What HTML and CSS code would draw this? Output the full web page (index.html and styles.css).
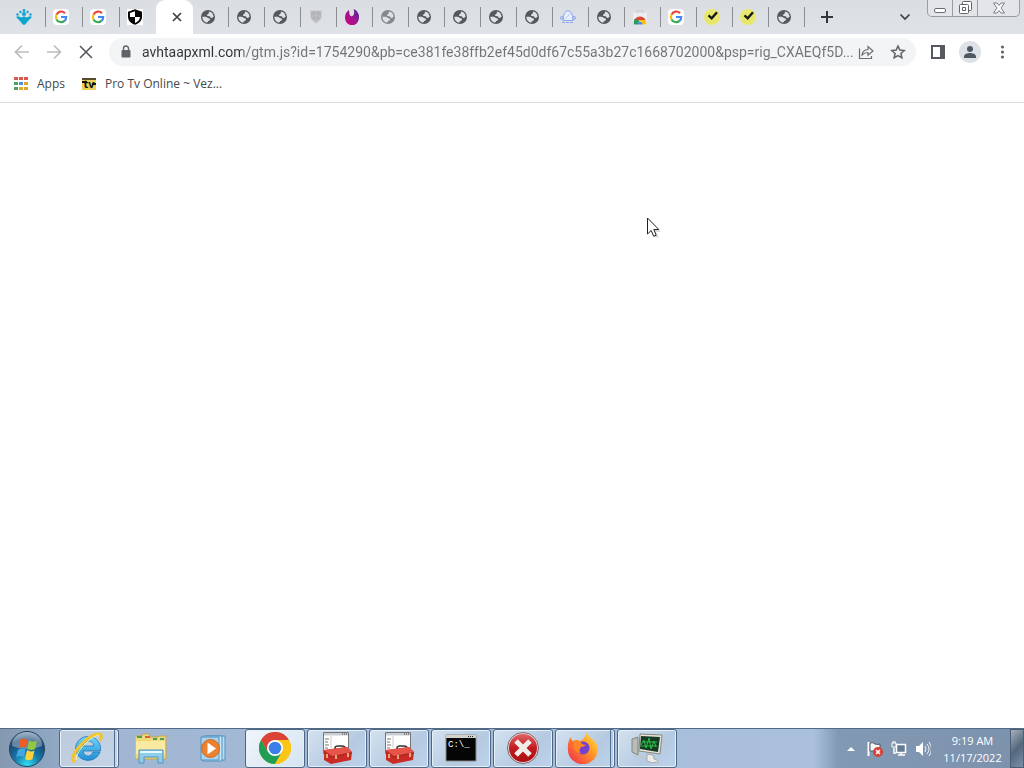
FILE: index.html
```html
<!DOCTYPE html>
<html lang="en">
<head>
<meta charset="utf-8">
<title>avhtaapxml.com</title>
<link rel="stylesheet" href="styles.css">
</head>
<body>
<svg class="sprite" aria-hidden="true">
  <defs>
    <linearGradient id="gPurple" x1="1" y1="0" x2="0" y2="1"><stop offset="0" stop-color="#3a2c9c"/><stop offset=".5" stop-color="#a3148f"/><stop offset="1" stop-color="#d3007c"/></linearGradient>
    <radialGradient id="gOrb" cx=".5" cy=".95" r=".95"><stop offset="0" stop-color="#2fe0f5"/><stop offset=".4" stop-color="#1577a8"/><stop offset=".75" stop-color="#1d4973"/><stop offset="1" stop-color="#7e9cb8"/></radialGradient>
    <linearGradient id="gIe" x1="0" y1="0" x2="0" y2="1"><stop offset="0" stop-color="#73d5f7"/><stop offset="1" stop-color="#1f8fd6"/></linearGradient>
    <linearGradient id="gFox" x1="1" y1="0" x2="0" y2="1"><stop offset="0" stop-color="#fff04a"/><stop offset=".4" stop-color="#ff9a26"/><stop offset="1" stop-color="#f0244e"/></linearGradient>
    <linearGradient id="gRed" x1="0" y1="0" x2="0" y2="1"><stop offset="0" stop-color="#e2696b"/><stop offset=".5" stop-color="#c21a20"/><stop offset="1" stop-color="#a80f14"/></linearGradient>
  </defs>
  <symbol id="globe" viewBox="0 0 16 16">
    <circle cx="8" cy="8" r="7" fill="currentColor"/>
    <path d="M9.500 2.400c2.400.6 4 2.600 4.100 5.200-.6.900-1.500 1.500-2.500 1.300-.9-.2-.7-1.400-1.500-1.600-1-.2-2.600.1-2.700-1 0-1 1.500-.9 1.700-1.800.2-.7.200-1.500.9-2.100zM2.400 7.700h3.200c1.500 0 1.800 1.400 3 1.500 1.100.1 1.700.9 1.300 1.800-.4.800-1.500.6-1.900 1.300-.3.500-.3.900-.8 1.300-2.700-.3-4.800-2.700-4.800-5.900z" fill="#dee1e6"/>
  </symbol>
  <symbol id="google" viewBox="0 0 16 16">
    <rect width="16" height="16" rx="4" fill="#fff"/>
    <g fill="none" stroke-width="2.100"><path d="M12 4.200A5.200 5.200 0 0 0 3.500 5.600" stroke="#ea4335"/><path d="M3.500 5.600a5.200 5.200 0 0 0 0 4.800" stroke="#fbbc05"/><path d="M3.500 10.400a5.200 5.200 0 0 0 8 1.500" stroke="#34a853"/><path d="M8 8h5.200a5 5 0 0 1-1.700 3.900" stroke="#4285f4"/></g>
  </symbol>
  <symbol id="check" viewBox="0 0 16 16"><circle cx="8" cy="8" r="8" fill="#e7e86b"/><path d="M4.500 6.300l3.200 3 5.300-6" fill="none" stroke="#17181c" stroke-width="2.400"/></symbol>
  <symbol id="toolbox" viewBox="0 0 32 32">
    <path d="M2.500 .5h25v21h-25z" fill="#fff" stroke="#777"/><path d="M3 1h24v2.500H3z" fill="#c9cdd2"/><path d="M21 2h1m1 0h1m1 0h1" stroke="#333"/><path d="M4 7h4M4 10h3M4 13h4M4 16h3" stroke="#777"/><path d="M10 4v12" stroke="#ccc"/>
    <path d="M14 18v-2q0-2 3-2h4q3 0 3 2v2" fill="none" stroke="#333" stroke-width="1.500"/><path d="M3 18l23-3 5 5-1 8-20 4-7-4z" fill="#c92b25"/><path d="M3 18l23-3 5 5-20 4z" fill="#e7544a"/><path d="M3 21l8 4 20-4" fill="none" stroke="#a82420"/><path d="M6 22v4M15 23v4M27 21v4" stroke="#ead58c" stroke-width="1.500"/>
  </symbol>
</svg>

<header class="browser">
  <div class="tabstrip">
    <nav class="tabs" aria-label="Tabs">
      <button class="tab wide" aria-label="Tab 1"><svg viewBox="0 0 16 16"><g fill="#0fa5cf"><circle cx="8" cy="1.500" r="1.400"/><circle cx="4.500" cy="3" r="1.200"/><circle cx="11.500" cy="3" r="1.200"/><circle cx="1.500" cy="5.500" r="1.200"/><circle cx="14.500" cy="5.500" r="1.200"/><circle cx="8" cy="5" r="2"/><path d="M0 8q2-1.500 4 0 2.500 1 4-1 1.500 2 4 1 2-1.500 4 0l-4.500 4.500Q10 15.500 8 16q-2-.5-3.500-3.500z"/></g></svg></button>
      <button class="tab wide" aria-label="Google"><svg><use href="#google"/></svg></button>
      <button class="tab wide" aria-label="Google"><svg><use href="#google"/></svg></button>
      <button class="tab wide last" aria-label="Security"><svg viewBox="0 0 16 16"><path fill="#fff" d="M0 0h16v16H0z"/><path d="M8 .3l7 2.500v5c0 4-3 6.700-7 8-4-1.300-7-4-7-8v-5z" fill="#050505"/><path d="M8 2.300v5.700H3V4.100zM8 8h5c-.2 3-2.200 4.900-5 5.900z" fill="#fff"/></svg></button>
      <button class="tab active" aria-label="Close tab"><svg viewBox="0 0 16 16"><path d="M4 4l8 8M12 4l-8 8" stroke="#3c4043" stroke-width="1.700"/></svg></button>
      <button class="tab" aria-label="Tab 6"><svg><use href="#globe"/></svg></button>
      <button class="tab" aria-label="Tab 7"><svg><use href="#globe"/></svg></button>
      <button class="tab" aria-label="Tab 8"><svg><use href="#globe"/></svg></button>
      <button class="tab" aria-label="Tab 9"><svg viewBox="0 0 16 16"><path d="M2 1h12v9l-6 5-6-5z" fill="#cfd1d4"/><path d="M7 2v11M9 2v11M3 3h3v2H3m0 3h3v2H4M13 3h-3v2h3m0 3h-3v2h2M6 6H3m7 0h3" fill="none" stroke="#a2a5a9"/></svg></button>
      <button class="tab" aria-label="Tab 10"><svg viewBox="0 0 16 16"><path d="M5 1q0 4 1.500 6Q9 8 10 5q.5-3-.5-5Q15 2 15 8.500A7 7.500 0 0 1 1 9Q.8 4 5 1z" fill="url(#gPurple)"/></svg></button>
      <button class="tab pale" aria-label="Tab 11"><svg><use href="#globe"/></svg></button>
      <button class="tab" aria-label="Tab 12"><svg><use href="#globe"/></svg></button>
      <button class="tab" aria-label="Tab 13"><svg><use href="#globe"/></svg></button>
      <button class="tab" aria-label="Tab 14"><svg><use href="#globe"/></svg></button>
      <button class="tab" aria-label="Tab 15"><svg><use href="#globe"/></svg></button>
      <button class="tab" aria-label="Tab 16"><svg viewBox="0 0 16 16"><g fill="none" stroke="#8aa6ee"><path d="M8 1.500q5 1 5 10H3q0-9 5-10z" fill="#e5edff"/><path d="M5 10l6-6" stroke="#b9caf6"/><circle cx="2" cy="9" r="1.500"/><circle cx="14" cy="9" r="1.500"/><path d="M2 13.500h12" stroke-dasharray="3 1"/></g></svg></button>
      <button class="tab" aria-label="Tab 17"><svg><use href="#globe"/></svg></button>
      <button class="tab" aria-label="Web Store"><svg viewBox="0 0 16 16"><path d="M1 4h14v12H1z" fill="#eceeef"/><path d="M5.500 4V1.500h5V4" fill="none" stroke="#c8cbd0"/><path d="M2.500 11A6 6 0 0 1 13.500 11l-5.500.5z" fill="#dd4537"/><path d="M2.500 10q-1 2-.8 5.500H6q0-3 2-3.500z" fill="#2a9b56"/><path d="M8 11h5.500q1 2 .8 4.500H9z" fill="#fbc116"/><path d="M5.500 15.500a2.500 2.500 0 0 1 5 0z" fill="#4285f4"/></svg></button>
      <button class="tab" aria-label="Google"><svg><use href="#google"/></svg></button>
      <button class="tab" aria-label="Tab 20"><svg><use href="#check"/></svg></button>
      <button class="tab" aria-label="Tab 21"><svg><use href="#check"/></svg></button>
      <button class="tab" aria-label="Tab 22"><svg><use href="#globe"/></svg></button>
    </nav>
    <button class="icon newtab" aria-label="New tab"><svg viewBox="0 0 16 16"><path d="M8 2v12M2 8h12" stroke="#33373b" stroke-width="2"/></svg></button>
    <button class="icon search" aria-label="Search tabs"><svg viewBox="0 0 16 16"><path d="M3.500 5.500L8 10l4.500-4.500" fill="none" stroke="#3c4043" stroke-width="1.700"/></svg></button>
    <div class="window-controls">
      <button aria-label="Minimize"><svg viewBox="0 0 16 16"><rect x="2.500" y="8.500" width="11" height="4" rx="1.500" fill="#fff" stroke="#686d73"/></svg></button>
      <button aria-label="Restore"><svg viewBox="0 0 16 16"><g fill="#fff" stroke="#60656b"><rect x="5.500" y="1.500" width="9" height="9" rx="1"/><rect x="2.500" y="4.500" width="9" height="9" rx="1"/><path d="M5.500 7.500h3v3h-3z"/></g></svg></button>
      <button class="close" aria-label="Close"><svg viewBox="0 0 16 16"><path d="M2.500 3h3.500l2 2.500L10 3h3.500L10 8l3.500 5H10L8 10.500 6 13H2.500L6 8z" fill="#fff" stroke="#777b80"/></svg></button>
    </div>
  </div>

  <div class="toolbar">
    <div class="history">
      <button class="icon" aria-label="Back"><svg viewBox="0 0 16 16"><path d="M15 8H2M8 1.500L1.500 8 8 14.500" fill="none" stroke="#babcbe" stroke-width="1.700"/></svg></button>
      <button class="icon" aria-label="Forward"><svg viewBox="0 0 16 16"><path d="M1 8h13M8 1.500L14.500 8 8 14.500" fill="none" stroke="#babcbe" stroke-width="1.700"/></svg></button>
      <button class="icon" aria-label="Stop"><svg viewBox="0 0 16 16"><path d="M2 2l12 12M14 2L2 14" stroke="#55595d" stroke-width="1.600"/></svg></button>
    </div>
    <div class="omnibox">
      <svg class="lock" viewBox="0 0 16 16"><path d="M4.500 6h7q1 0 1 1v5.500q0 1-1 1h-7q-1 0-1-1V7q0-1 1-1z" fill="#5f6368"/><path d="M5.500 7V4.500a2.500 2.500 0 0 1 5 0V7" fill="none" stroke="#5f6368" stroke-width="1.400"/></svg>
      <input class="url" type="text" aria-label="Address" value="avhtaapxml.com/gtm.js?id=1754290&amp;pb=ce381fe38ffb2ef45d0df67c55a3b27c1668702000&amp;psp=rig_CXAEQf5D...">
      <div class="page-actions">
        <button class="icon" aria-label="Share"><svg viewBox="0 0 16 16"><path d="M1.500 4.500v10h12V12M4 11q.5-5 6-5.500V2.500L15 7l-5 4.300V8.500Q6.500 8.500 4 11z" fill="none" stroke="#6a6e72" stroke-width="1.200"/></svg></button>
        <button class="icon" aria-label="Bookmark"><svg viewBox="0 0 16 16"><path d="M8 2l1.800 4.100 4.400.4-3.300 2.900 1 4.400L8 11.500l-3.900 2.300 1-4.400-3.300-2.900 4.400-.4z" fill="none" stroke="#5f6368" stroke-width="1.500"/></svg></button>
      </div>
    </div>
    <div class="actions">
      <button class="icon" aria-label="Side panel"><svg viewBox="0 0 16 16"><path d="M2 2h12v12H2z" fill="#fff" stroke="#56595e" stroke-width="2"/><path d="M10 2h4v12h-4z" fill="#56595e"/></svg></button>
      <button class="icon avatar" aria-label="Profile"><svg viewBox="0 0 16 16"><circle cx="8" cy="5" r="3" fill="#4e5862"/><path d="M2 14v-1.500C2 10 5.500 9 8 9s6 1 6 3.500V14z" fill="#4e5862"/></svg></button>
      <button class="icon" aria-label="Menu"><svg viewBox="0 0 16 16"><g fill="#5f6368"><circle cx="8.500" cy="3" r="1.600"/><circle cx="8.500" cy="8" r="1.600"/><circle cx="8.500" cy="13" r="1.600"/></g></svg></button>
    </div>
  </div>

  <nav class="bookmarks" aria-label="Bookmarks">
    <a href="#"><svg viewBox="0 0 16 16"><path d="M1 1h4v3H1zM6 1h4v3H6zM11 1h4v3h-4z" fill="#dc584b"/><path d="M1 6h4v3H1zM1 11h4v3H1z" fill="#48a35e"/><path d="M6 6h4v3H6z" fill="#4b8fe8"/><path d="M11 6h4v3h-4zM6 11h4v3H6zM11 11h4v3h-4z" fill="#e0a72e"/></svg>Apps</a>
    <a href="#"><svg viewBox="0 0 16 16"><path d="M1 2h14v12H1z" fill="#e7d157"/><path d="M1 2h14v2H1z" fill="#5b4b2a"/><path d="M1 6h5m9 2h-4" stroke="#111" stroke-width="2"/><text x="8" y="12" text-anchor="middle" class="tv">tv</text></svg>Pro Tv Online ~ Vez...</a>
  </nav>
</header>

<main class="page">
  <svg class="cursor" viewBox="0 0 16 24" aria-hidden="true"><path d="M3 4l11 11H9l3 5-3 1-3-5z" fill="#bbb" opacity=".5"/><path d="M.5 1v16l3.700-3.500 2.500 5.800 2.500-1.100L6.800 12.500h5z" fill="#fff" stroke="#222"/></svg>
</main>

<footer class="taskbar">
  <button class="start" aria-label="Start"><svg viewBox="0 0 36 36"><circle cx="18" cy="18" r="17.500" fill="url(#gOrb)" stroke="#25435f"/><path d="M3 15a15 14 0 0 1 30 0q-15 6-30 0z" fill="#fff" opacity=".32"/><path d="M11 9q4-3 7.500 0l-1.500 8q-4-2-7.500.5z" fill="#ee5b25"/><path d="M20 9.500q4 2.500 8 0l-2 8.500q-4 2-7.500 0z" fill="#92c83e"/><path d="M9 19q4-2.500 7.500-.5L15 26q-4-2-8 .5z" fill="#43a7e2"/><path d="M18 19q4 2.500 7.500.5L23.500 28q-3.500 2.500-7.500 0z" fill="#fcd13a"/></svg></button>
  <div class="tasks">
    <button class="task stacked ie" aria-label="Internet Explorer"><svg viewBox="0 0 32 32"><path d="M29 20a12.500 12 0 1 1 .5-5v4H12q1 5 5.500 5 3 0 4.500-4zM12 14h11q-1-5-5.500-5T12 14z" fill="url(#gIe)" stroke="#2479b8" stroke-width=".8"/><path d="M4 30Q-2 27 8 15 19 2 28 2q4 0 1 7" fill="none" stroke="#f2c52c" stroke-width="3"/><path d="M5 28Q5 20 16 10 24 3 28 3" fill="none" stroke="#fff0a0"/></svg></button>
    <button class="task flat" aria-label="Explorer"><svg viewBox="0 0 32 32"><path d="M0 4h7l1-2h6l1 3h8l1-1h7v23H0z" fill="#f0d979" stroke="#c5a84e"/><path d="M2 5h5M18 7h4M25 7h4" stroke="#4c9c61" stroke-width="2"/><path d="M10 5h5" stroke="#d8643a" stroke-width="2"/><path d="M1 9h29v13H1z" fill="#fae9a0"/><path d="M4 31V18h24v13h-5v-6H9v6z" fill="#8fcdec" stroke="#5194be"/><path d="M5 20h22" stroke="#e5faff" stroke-width="2"/></svg></button>
    <button class="task flat" aria-label="Media Player"><svg viewBox="0 0 32 32"><path d="M9 4h19v24H9z" fill="#b9def2" stroke="#5290bf"/><path d="M6 4h19v25H6z" fill="#c8e8f5" stroke="#5290bf"/><path d="M4 5h18v23H4z" fill="#a9d4ef" stroke="#5290bf"/><circle cx="13.500" cy="16.500" r="9" fill="#ed8130" stroke="#cf6920"/><path d="M10.500 10.500l8.500 6-8.500 6z" fill="#fff"/></svg></button>
    <button class="task bright" aria-label="Chrome"><svg viewBox="0 0 32 32"><circle cx="16" cy="16" r="16" fill="#fbc616"/><path d="M2.100 8A16 16 0 0 1 29.900 8H16l-7 12z" fill="#db4337"/><path d="M2.100 8A16 16 0 0 0 16 32l7-12-14 0z" fill="#209e55"/><path d="M29.900 8A16 16 0 0 1 16 32l7-12-1-12z" fill="#fbc616"/><circle cx="16" cy="16" r="8" fill="#fff"/><circle cx="16" cy="16" r="6.300" fill="#3d7fe8"/></svg></button>
    <button class="task" aria-label="Tools"><svg><use href="#toolbox"/></svg></button>
    <button class="task" aria-label="Tools"><svg><use href="#toolbox"/></svg></button>
    <button class="task" aria-label="Command Prompt"><svg viewBox="0 0 32 32"><path d="M1 3h30v26H1z" fill="#050505" stroke="#888"/><path d="M1 3h30v3H1z" fill="#d4d2ca"/><path d="M23 4.500h1m1 0h1m1 0h1" stroke="#222"/><text x="3" y="15" class="prompt">C:\_</text></svg></button>
    <button class="task" aria-label="Stop"><svg viewBox="0 0 32 32"><circle cx="16" cy="16" r="15" fill="url(#gRed)" stroke="#e7d8d8" stroke-width="2"/><circle cx="16" cy="16" r="15.500" fill="none" stroke="#7b6670"/><path d="M9 9l14 14M23 9L9 23" stroke="#f0ece8" stroke-width="5"/></svg></button>
    <button class="task stacked" aria-label="Firefox"><svg viewBox="0 0 32 32"><path d="M20 0q1 4 5 7 6 4 5.500 11A14.500 14 0 0 1 1 18Q0 10 4 5q0 3 2 4 4-2 7 0 5-2 7-9z" fill="url(#gFox)"/><circle cx="16" cy="16" r="6.500" fill="#7542cf"/><path d="M7 9q6-1 8 3l4 1q-2 2-5 2-3 4 0 6-6 0-7-5z" fill="#ff8427"/></svg></button>
    <button class="task" aria-label="Monitor"><svg viewBox="0 0 32 32"><path d="M1 7l6-2v18l-6-3z" fill="#b9bbb4" stroke="#858780"/><path d="M9 2l22 1-2 19-21-3z" fill="#e7e5dc" stroke="#85877f"/><path d="M10 4l19 1-2 15-18-3z" fill="#153b22"/><path d="M10 13l3-5 2 8 3-10 2 11 3-8 2 6M11 10h15M10 14h16" fill="none" stroke="#28bd46"/><path d="M16 22l6 1 1 4q5 1 4 3-6 2-11-1z" fill="#ececea" stroke="#aaa"/><path d="M2 22l14 4-3 1-11-4z" fill="#c3c6c3"/></svg></button>
  </div>
  <div class="tray">
    <button class="icon" aria-label="Show hidden icons"><svg viewBox="0 0 16 16"><path d="M4 10l4-4 4 4z" fill="#fff"/></svg></button>
    <button class="icon" aria-label="Action Center"><svg viewBox="0 0 16 16"><path d="M1.500 1v14" stroke="#fff" stroke-width="2"/><path d="M3 2q3-1 5 1 3 1 5 0v7H3z" fill="#f4f6f8" stroke="#555d69"/><circle cx="11" cy="11" r="5" fill="#d84034"/><path d="M9 9l4 4M13 9l-4 4" stroke="#fff" stroke-width="1.500"/></svg></button>
    <button class="icon" aria-label="Network"><svg viewBox="0 0 16 16"><path d="M5.500 3.500h9v8h-9zM7 14h7M10 12v2M3 7v5h2" fill="#657b94" stroke="#fff" stroke-width="1.500"/><path d="M1 2h4v4H1zM2 0v2M4 0v2" fill="#8293a7" stroke="#fff"/></svg></button>
    <button class="icon" aria-label="Volume"><svg viewBox="0 0 16 16"><path d="M1 5h3l4-4v14l-4-4H1z" fill="#fff"/><path d="M10 5q2 3 0 6M12 3q4 5 0 10M14 1q5 7 0 14" fill="none" stroke="#eef3fa"/></svg></button>
    <button class="clock"><span>9:19 AM</span><span>11/17/2022</span></button>
    <button class="desktop" aria-label="Show desktop"></button>
  </div>
</footer>
</body>
</html>
```
FILE: styles.css
```css
* { box-sizing: border-box; }
body { margin: 0; min-height: 100vh; display: flex; flex-direction: column; background: #fff; font-family: "Open Sans", "Noto Sans", sans-serif; font-size: 12px; color: #3c4043; }
button { border: 0; padding: 0; background: none; font: inherit; color: inherit; }
svg { display: block; width: 16px; height: 16px; flex: none; }
.sprite { position: absolute; width: 0; height: 0; }
.tabstrip { display: flex; height: 34px; background: linear-gradient(#dadde1, #dfe2e7); align-items: center; padding-left: 9px; }
.tabs { display: flex; height: 100%; align-items: center; }
.tab { display: flex; align-items: center; width: 36px; height: 20px; padding-left: 7px; border-right: 1px solid #8b8e93; color: #55595e; }
.wide { width: 37px; }
.last { width: 36px; border-right: 0; }
.pale { color: #85888c; }
.active { width: 37px; height: 34px; align-self: flex-end; padding-left: 13px; background: #fff; border: 0; border-radius: 9px 9px 0 0; }
.icon { display: flex; align-items: center; justify-content: center; flex: none; width: 24px; height: 24px; }
.newtab { margin-left: 10px; }
.search { margin-left: auto; margin-right: 10px; }
.window-controls { display: flex; align-self: flex-start; height: 17px; margin-right: 4px; border: 1px solid #999da2; border-top: 0; border-radius: 0 0 5px 5px; background: #e3e5e9; }
.window-controls button { width: 25px; display: flex; align-items: center; justify-content: center; border-right: 1px solid #999da2; }
.window-controls .close { width: 41px; border: 0; }
.toolbar { display: flex; align-items: center; height: 36px; padding: 0 10px; background: #fff; }
.history { display: flex; gap: 8px; margin-right: 11px; }
.omnibox { display: flex; flex: 1; align-items: center; height: 28px; padding: 0 6px 0 9px; border-radius: 14px; background: #f3f4f5; }
.lock { margin-right: 8px; }
.url { flex: 1; min-width: 0; height: 24px; padding: 0; border: 0; outline: 0; font: 14px Roboto, "Open Sans", sans-serif; background: linear-gradient(90deg, #303337 100px, #707377 100px); background-clip: text; -webkit-background-clip: text; -webkit-text-fill-color: transparent; }
.page-actions { display: flex; gap: 8px; }
.actions { display: flex; gap: 8px; margin-left: 10px; }
.avatar { border-radius: 50%; background: #dee2e6; width: 22px; height: 22px; margin: 1px; }
.bookmarks { display: flex; gap: 16px; height: 33px; padding: 0 13px 5px; align-items: center; border-bottom: 1px solid #dadcde; }
.bookmarks a { display: flex; align-items: center; gap: 8px; color: #45484b; text-decoration: none; }
.tv { font: bold 11px "Open Sans", sans-serif; fill: #111; }
.page { flex: 1; position: relative; }
.cursor { position: absolute; left: 647px; top: 114px; width: 16px; height: 24px; }
.taskbar { display: flex; height: 40px; border-top: 1px solid #526a84; background: #a9c0dc; box-shadow: inset 0 1px #d0dfef; }
.start { width: 59px; padding: 1px 0 0 9px; background: linear-gradient(90deg, #8499b0, #91a9c5); }
.start svg { width: 36px; height: 36px; }
.tasks { display: flex; flex: 1; gap: 2px; background: linear-gradient(90deg, #9fb5d2, #aac0dd); }
.task { position: relative; display: flex; align-items: center; justify-content: center; width: 60px; padding-bottom: 2px; border: 1px solid #4c6787; border-radius: 3px; background: linear-gradient(135deg, #d4e2f0, #b5cae1 60%, #bdd3eb); box-shadow: inset 0 0 0 1px #e5f0f9; }
.task svg { width: 32px; height: 32px; }
.task.flat { border-color: transparent; background: none; box-shadow: none; }
.task.bright { background: linear-gradient(135deg, #f0f5fa, #d5e4f2); }
.task.ie { background: linear-gradient(135deg, #bdcbdc, #c4d4e6); }
.task.stacked { padding-right: 5px; }
.task.stacked::after { content: ""; position: absolute; top: 0; bottom: 0; right: 3px; border-left: 1px solid #536f8f; }
.prompt { font: 9px "Liberation Mono", monospace; fill: #fff; }
.tray { display: flex; align-items: center; padding-left: 25px; background: linear-gradient(90deg, #aac0dd, #8299b4 24px, #7c91ac); }
.clock { display: flex; flex-direction: column; width: 75px; align-items: center; line-height: 17px; color: #fff; font-size: 11px; }
.desktop { align-self: stretch; width: 14px; border: 1px solid #4b5e74; background: linear-gradient(135deg, #a5b1be, #53687d 50%, #7b8fa6); }
```
